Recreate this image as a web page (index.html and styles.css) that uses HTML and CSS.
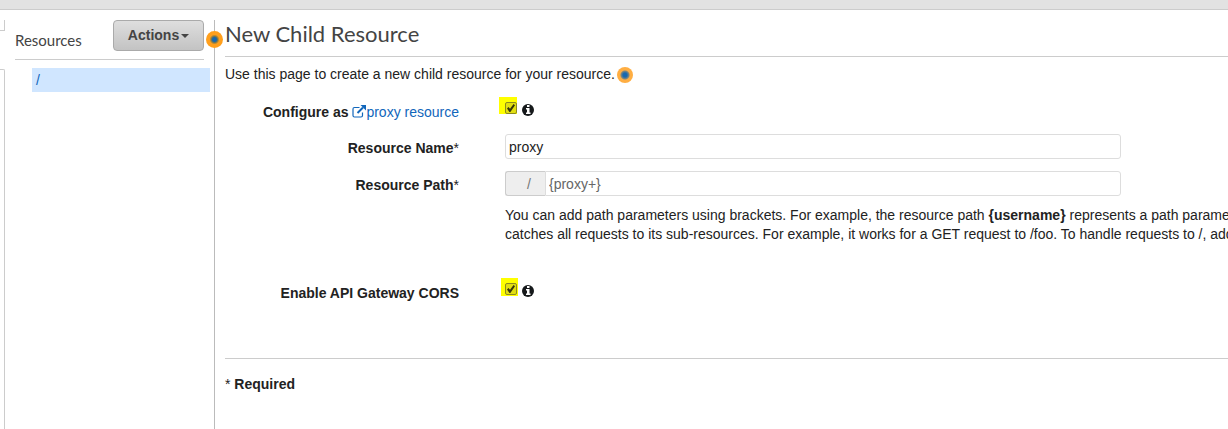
FILE: index.html
```html
<!DOCTYPE html>
<html lang="en">
<head>
<meta charset="utf-8">
<title>New Child Resource</title>
<link rel="stylesheet" href="styles.css">
</head>
<body>
<svg class="defs" aria-hidden="true">
  <symbol id="info" viewBox="0 0 12 12">
    <circle cx="6" cy="6" r="6" fill="#16191b"/>
    <path d="M5 1h2.500v2H5zM4 4h3.500v4.500h1V10H4V8.500h1v-3H4z" fill="#fff"/>
  </symbol>
</svg>
<header class="topbar"></header>
<div class="layout">
  <div class="rail"><div class="rail-top"></div><div class="rail-bottom"></div></div>
  <aside class="sidebar">
    <div class="sidebar-head">
      <h2 class="sidebar-title">Resources</h2>
      <button class="actions" type="button">Actions<span class="caret"></span></button>
    </div>
    <nav class="tree"><a class="tree-item" href="#root">/</a></nav>
  </aside>
  <main class="main">
    <span class="dot dot-edge"></span>
    <h1 class="title">New Child Resource</h1>
    <p class="intro">Use this page to create a new child resource for your resource.<span class="dot dot-soft"></span></p>
    <form class="form">
      <div class="row row-check">
        <div class="label"><label for="isproxy">Configure as</label> <a class="link" href="#proxy"><svg class="external" viewBox="0 0 14 13" aria-hidden="true"><path d="M7.500 2.500H2.500Q1 2.500 1 4v6.500Q1 12 2.500 12h6.500q1.500 0 1.500-1.500V7.500" fill="none" stroke="currentColor" stroke-width="1.200"/><path d="M5.500 8 11 2.500" stroke="currentColor" stroke-width="2"/><path d="M8.500 0H14v5.500z" fill="currentColor"/></svg>proxy resource</a></div>
        <div class="checks"><span class="mark mark-a"><input class="check" id="isproxy" type="checkbox" checked></span><svg class="info"><use href="#info"/></svg></div>
      </div>
      <div class="row">
        <label class="label" for="name">Resource Name<span class="star">*</span></label>
        <input class="field" id="name" type="text" value="proxy">
      </div>
      <div class="row">
        <label class="label" for="path">Resource Path<span class="star">*</span></label>
        <div class="group"><span class="addon">/</span><input class="field path" id="path" type="text" value="{proxy+}"></div>
      </div>
      <p class="help">You can add path parameters using brackets. For example, the resource path <b>{username}</b> represents a path parame<br>catches all requests to its sub-resources. For example, it works for a GET request to /foo. To handle requests to /, add</p>
      <div class="row row-check">
        <label class="label" for="cors">Enable API Gateway CORS</label>
        <div class="checks"><span class="mark mark-b"><input class="check" id="cors" type="checkbox" checked></span><svg class="info"><use href="#info"/></svg></div>
      </div>
    </form>
    <footer class="required"><span class="star">*</span> <b>Required</b></footer>
  </main>
</div>
</body>
</html>
```

FILE: styles.css
```css
* { box-sizing: border-box; }
body {
  margin: 0;
  min-height: 100vh;
  display: flex;
  flex-direction: column;
  overflow: hidden;
  background: #fff;
  color: #222;
  font: 14px/20px "Liberation Sans", Arial, sans-serif;
}
h1, h2, p { margin: 0; font-weight: 400; }
.defs { position: absolute; width: 0; height: 0; }
.topbar { height: 10px; background: #e2e2e2; border-bottom: 1px solid #ccc; }
.layout {
  flex: 1;
  display: grid;
  grid-template-columns: 15px 195px minmax(0, 1fr);
  padding-top: 10px;
}
.rail { display: flex; flex-direction: column; gap: 38px; width: 5px; }
.rail-top { height: 11px; border: solid #ccc; border-width: 0 1px 1px 0; }
.rail-bottom { flex: 1; border: solid #ccc; border-width: 1px 1px 0 0; border-radius: 0 2px 0 0; }
.sidebar-head {
  display: flex;
  justify-content: space-between;
  align-items: center;
  height: 40px;
  margin-right: 6px;
  padding-bottom: 8px;
  border-bottom: 1px solid #ccc;
}
.sidebar-title { padding-top: 8px; font: 15px/20px Lato, sans-serif; color: #444; }
.actions {
  height: 31px;
  width: 91px;
  padding: 0 0 2px;
  border: 1px solid #aaa;
  border-radius: 4px;
  background: linear-gradient(#dedede, #c3c3c3);
  color: #444;
  font: bold 14px/20px "Liberation Sans", Arial, sans-serif;
}
.caret {
  display: inline-block;
  margin-left: 2px;
  vertical-align: middle;
  border: solid transparent;
  border-width: 4px 4px 0;
  border-top-color: #444;
}
.tree { padding: 8px 0 0 17px; }
.tree-item { display: block; height: 24px; padding-left: 4px; line-height: 24px; background: #d0e6ff; color: #1166bb; text-decoration: none; }
.main { position: relative; margin-left: 4px; padding-left: 10px; border-left: 1px solid #bbb; }
.dot {
  width: 16px;
  height: 16px;
  border-radius: 50%;
  background: radial-gradient(circle, #1768b0 0 2px, #6e7454 3px, #ff9f1c 5px);
}
.dot-edge { position: absolute; left: -9px; top: 11px; width: 17px; height: 17px; }
.dot-soft { display: inline-block; margin-left: 2px; vertical-align: -4px; background: radial-gradient(circle, #1768b0 0 2px, #83877b 4px, #ffae42 5px); }
.title { height: 37px; border-bottom: 1px solid #ccc; font: 22px/28px Lato, sans-serif; color: #444; }
.intro { height: 27px; padding-top: 7px; }
.form { display: flex; flex-direction: column; gap: 12px; padding-top: 18px; }
.row { display: grid; grid-template-columns: 234px minmax(0, 616px); column-gap: 46px; height: 25px; }
.row-check { height: 20px; }
.label { padding-top: 4px; text-align: right; font-weight: 700; }
.row-check .label { padding-top: 0; }
.star { font-weight: 400; }
.link { color: #1166bb; font-weight: 400; text-decoration: none; }
.external { width: 14px; height: 13px; vertical-align: -1px; }
.checks { display: flex; gap: 4px; align-items: flex-start; }
.mark { position: relative; width: 13px; height: 13px; }
.mark::before { content: ""; position: absolute; background: #ff0; }
.mark-a::before { inset: -5px 1px 1px -6px; }
.mark-b::before { inset: -5px 0 0 -4px; }
.check {
  appearance: none;
  position: relative;
  display: block;
  width: 12px;
  height: 12px;
  margin: 0;
  border: 1px solid #8c8a20;
  border-radius: 2px;
  background: #e2df12;
}
.check::after {
  content: "";
  position: absolute;
  inset: 1px;
  background: #38380c;
  clip-path: polygon(0 55%, 18% 38%, 38% 58%, 82% 0, 100% 15%, 42% 100%, 30% 100%);
}
.info { width: 12px; height: 12px; margin-top: 2px; }
.field {
  width: 100%;
  height: 25px;
  padding: 0 3px;
  border: 1px solid #ddd;
  border-radius: 3px;
  background: #fff;
  color: #222;
  font: 14px/20px "Liberation Sans", Arial, sans-serif;
}
.group { display: flex; }
.addon { width: 40px; flex: none; padding: 2px 14px 0 0; text-align: right; border: 1px solid #ccc; border-right: 0; border-radius: 3px 0 0 3px; background: #eee; color: #777; }
.path { border-radius: 0 3px 3px 0; color: #666; }
.help { margin: -2px 0 27px 280px; line-height: 19px; white-space: nowrap; }
.required { margin-top: 55px; padding-top: 15px; border-top: 1px solid #ccc; }
```
